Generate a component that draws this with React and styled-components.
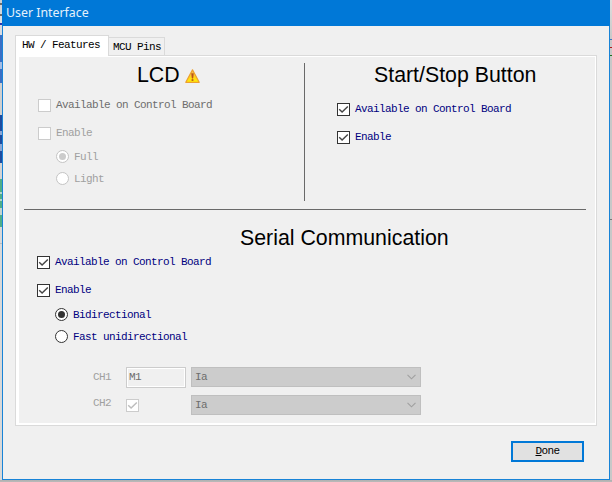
import React from "react";
import styled, { createGlobalStyle, css } from "styled-components";

const Global = createGlobalStyle`
  * { box-sizing: border-box; }
  body { margin: 0; overflow: hidden; background: #c4c4c4; }
`;

const mono = css`
  font-family: "Liberation Mono", monospace;
  font-size: 11px;
  letter-spacing: -0.6px;
  white-space: pre;
`;

const Desktop = styled.div`
  display: grid;
  grid-template-columns: 2px 608px 2px;
  grid-template-rows: 480px 2px;
  width: 612px;
  height: 482px;
`;

const LeftEdge = styled.div`
  background: linear-gradient(
    #c9d0d6 0 3px, #6b6b6b 3px 5px, #d4d8dc 5px 14px, #6b6b6b 14px 16px,
    #dfe1e4 16px 23px, #2b35b0 23px 25px, #d9dbe0 25px 35px,
    #3b6fc4 35px 62px, #a5bde4 62px 69px, #3b6fc4 69px 83px,
    #cfcfcf 83px 115px, #1e4c9f 115px 131px, #8ba6d4 131px 135px, #1e4c9f 135px 144px,
    #8ba6d4 144px 151px, #1e4c9f 151px 163px, #d3d3d3 163px 179px,
    #4fae88 179px 192px, #b4d6c8 192px 194px, #4fae88 194px 199px, #b4d6c8 199px 201px,
    #4fae88 201px 208px, #c4d4ce 208px 215px, #4fae88 215px 227px,
    #d8d8d8 227px 243px, #bcbcbc 243px 244px, #d8d8d8 244px 480px
  );
`;

const RightEdge = styled.div`
  background: linear-gradient(
    #dedede 0, #c8c8c8 39px, #3a78c0 39px 40px, #c8c8c8 40px 47px,
    #b01818 47px 48px, #c8c8c8 48px 55px, #1d701d 55px 56px,
    #c8c8c8 56px 219px, #777 219px 220px, #c8c8c8 220px
  );
`;

const BottomEdge = styled.div`
  grid-column: 1 / -1;
  background: linear-gradient(#b0b0b0, #bababa);
`;

const Window = styled.main`
  display: flex;
  flex-direction: column;
  border: 1px solid #1883d7;
  border-top: 0;
  background: #f0f0f0;
`;

const TitleBar = styled.header`
  height: 26px;
  margin: 0 -1px;
  padding-left: 4px;
  background: #0078d7;
  color: #e4f1fb;
  font: 12.35px/25px "Noto Sans", sans-serif;
`;

const Tabs = styled.nav`
  display: flex;
  align-items: flex-end;
  height: 29px;
  padding-left: 12px;
`;

const Tab = styled.div`
  ${mono}
  border: 1px solid #dadada;
  border-bottom: 0;
  color: #000;
  ${(p) =>
    p.$active
      ? css`
          width: 94px;
          height: 21px;
          margin-bottom: -1px;
          padding-left: 6px;
          line-height: 18px;
          background: #fff;
          position: relative;
          z-index: 1;
        `
      : css`
          width: 56px;
          height: 18px;
          border-left: 0;
          padding-left: 4px;
          line-height: 18px;
          background: #f0f0f0;
        `}
`;

const Panel = styled.section`
  width: 582px;
  height: 371px;
  margin-left: 12px;
  border: 1px solid #dadada;
  background: #fff;
  padding: 1px 1px 2px 3px;
`;

const PanelBody = styled.div`
  height: 366px;
  padding: 6px 9px 0 5px;
  background: #f0f0f0;
`;

const TopFeatures = styled.div`
  display: grid;
  grid-template-columns: 281px 281px;
  height: 147px;
  border-bottom: 1px solid #696969;
`;

const LcdSection = styled.section`
  height: 138px;
  border-right: 1px solid #696969;
  padding-left: 14px;
`;

const ButtonSection = styled.section`
  padding-left: 32px;
`;

const SerialSection = styled.section`
  padding: 16px 0 0 13px;
`;

const Heading = styled.h2`
  display: flex;
  align-items: center;
  gap: 5px;
  height: 24px;
  margin: 0 0 ${(p) => p.$gap}px ${(p) => p.$indent}px;
  color: #000;
  font: 21.33px/24px "Liberation Sans", Arial, sans-serif;
  white-space: nowrap;
`;

const WarningIcon = styled.svg`
  margin-top: 2px;
`;

const Option = styled.div`
  display: flex;
  align-items: center;
  height: 13px;
  gap: 5px;
  margin-bottom: ${(p) => p.$gap || 0}px;
  margin-left: ${(p) => (p.$nested ? 18 : 0)}px;
  color: ${(p) => p.$color || "#000080"};
`;

const Label = styled.span`
  ${mono}
  line-height: 13px;
  padding-top: ${(p) => (p.$lowered ? 2 : 0)}px;
`;

const Box = styled.span`
  display: flex;
  flex: none;
  width: 13px;
  height: 13px;
  border: 1px solid ${(p) => (p.$disabled ? "#ccc" : "#333")};
  background: #fff;
`;

const Round = styled.span`
  display: grid;
  place-items: center;
  flex: none;
  width: 13px;
  height: 13px;
  border: 1px solid ${(p) => (p.$disabled ? "#c4c4c4" : "#333")};
  border-radius: 50%;
  background: #fff;
`;

const Dot = styled.span`
  width: 7px;
  height: 7px;
  border-radius: 50%;
  background: ${(p) => (p.$disabled ? "#ccc" : "#333")};
`;

const Channels = styled.div`
  display: grid;
  grid-template-columns: 33px 65px 230px;
  grid-template-rows: 21px 20px;
  row-gap: 7px;
  margin: 24px 0 0 56px;
  color: #a0a0a0;
`;

const ChannelLabel = styled.div`
  ${mono}
  line-height: 13px;
  padding-top: ${(p) => p.$top}px;
`;

const Input = styled.div`
  ${mono}
  width: 60px;
  height: 21px;
  border: 1px solid #ccc;
  box-shadow: inset 0 0 0 1px #fff;
  padding: 3px 0 0 2px;
  color: #6d6d6d;
  line-height: 13px;
`;

const CheckCell = styled.div`
  padding-top: 4px;
`;

const Select = styled.div`
  ${mono}
  display: flex;
  align-items: center;
  justify-content: space-between;
  height: 20px;
  border: 1px solid #bfbfbf;
  background: #ccc;
  padding: 0 4px 0 3px;
  color: #6d6d6d;
`;

const Footer = styled.footer`
  display: flex;
  justify-content: flex-end;
  padding: 15px 25px 0 0;
`;

const DoneButton = styled.button`
  ${mono}
  width: 73px;
  height: 21px;
  border: 2px solid #0078d7;
  background: #e1e1e1;
  padding: 0;
  color: #000;
  line-height: 17px;
  text-align: center;
`;

const Mnemonic = styled.span`
  text-decoration: underline;
  text-decoration-thickness: 1px;
  text-underline-offset: 1px;
`;

function Check({ disabled }) {
  return (
    <svg width="11" height="11" viewBox="0 0 11 11">
      <path d="M1.2 5.2 4.1 8.1 9.8 2.4" fill="none" stroke={disabled ? "#bdbdbd" : "#444"} strokeWidth="1.4" />
    </svg>
  );
}

function CheckOption({ children, checked, disabled, color, gap }) {
  return (
    <Option $color={color} $gap={gap}>
      <Box $disabled={disabled}>{checked && <Check disabled={disabled} />}</Box>
      <Label>{children}</Label>
    </Option>
  );
}

function RadioOption({ children, checked, disabled, color, gap }) {
  return (
    <Option $nested $color={color} $gap={gap}>
      <Round $disabled={disabled}>{checked && <Dot $disabled={disabled} />}</Round>
      <Label $lowered>{children}</Label>
    </Option>
  );
}

function Warning() {
  return (
    <WarningIcon width="15" height="14" viewBox="0 0 15 14">
      <defs>
        <linearGradient id="warn" x1="0" y1="0" x2="0" y2="1">
          <stop offset="0" stopColor="#f8c66a" />
          <stop offset=".55" stopColor="#ffd21c" />
          <stop offset="1" stopColor="#fff000" />
        </linearGradient>
      </defs>
      <path d="M7.5.9 14.2 13.3H.8Z" fill="url(#warn)" stroke="#eda02e" strokeWidth="1.2" strokeLinejoin="round" />
      <path d="M6.5 4.4h2L8 9.2H7Z" fill="#b8501c" stroke="#b8501c" strokeWidth=".4" />
      <rect x="6.6" y="10.2" width="1.8" height="1.7" fill="#b8501c" />
    </WarningIcon>
  );
}

function Chevron() {
  return (
    <svg width="9" height="6" viewBox="0 0 9 6">
      <path d="M.5.8 4.5 4.8 8.5.8" fill="none" stroke="#a0a0a0" strokeWidth="1.1" />
    </svg>
  );
}

export default function App() {
  return (
    <>
      <Global />
      <Desktop>
        <LeftEdge />
        <Window>
          <TitleBar>User Interface</TitleBar>
          <Tabs>
            <Tab $active>HW / Features</Tab>
            <Tab>MCU Pins</Tab>
          </Tabs>
          <Panel>
            <PanelBody>
              <TopFeatures>
                <LcdSection>
                  <Heading $indent={99} $gap={12}>
                    LCD
                    <Warning />
                  </Heading>
                  <CheckOption disabled color="#6d6d6d" gap={15}>Available on Control Board</CheckOption>
                  <CheckOption disabled color="#a0a0a0" gap={10}>Enable</CheckOption>
                  <RadioOption disabled checked color="#a0a0a0" gap={9}>Full</RadioOption>
                  <RadioOption disabled color="#a0a0a0">Light</RadioOption>
                </LcdSection>
                <ButtonSection>
                  <Heading $indent={37} $gap={16}>Start/Stop Button</Heading>
                  <CheckOption checked gap={15}>Available on Control Board</CheckOption>
                  <CheckOption checked>Enable</CheckOption>
                </ButtonSection>
              </TopFeatures>
              <SerialSection>
                <Heading $indent={203} $gap={6}>Serial Communication</Heading>
                <CheckOption checked gap={15}>Available on Control Board</CheckOption>
                <CheckOption checked gap={11}>Enable</CheckOption>
                <RadioOption checked gap={9}>Bidirectional</RadioOption>
                <RadioOption>Fast unidirectional</RadioOption>
                <Channels>
                  <ChannelLabel $top={4}>CH1</ChannelLabel>
                  <Input>M1</Input>
                  <Select>Ia<Chevron /></Select>
                  <ChannelLabel $top={2}>CH2</ChannelLabel>
                  <CheckCell>
                    <Box $disabled><Check disabled /></Box>
                  </CheckCell>
                  <Select>Ia<Chevron /></Select>
                </Channels>
              </SerialSection>
            </PanelBody>
          </Panel>
          <Footer>
            <DoneButton><Mnemonic>D</Mnemonic>one</DoneButton>
          </Footer>
        </Window>
        <RightEdge />
        <BottomEdge />
      </Desktop>
    </>
  );
}
